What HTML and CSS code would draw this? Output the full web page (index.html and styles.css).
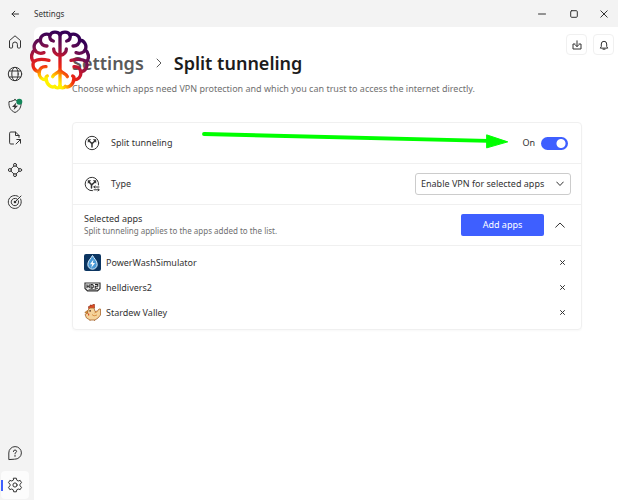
FILE: index.html
```html
<!DOCTYPE html>
<html lang="en">
<head>
  <meta charset="UTF-8" />
  <meta name="viewport" content="width=device-width, initial-scale=1.0"/>
  <title>Settings</title>
  <link rel="stylesheet" href="styles.css">
</head>
<body>
  <header class="titlebar">
    <button class="back" aria-label="Back">
      <svg class="icon" width="8" height="8" viewBox="0 0 8 8"><path d="M7.5 4H1M3.8 1.2L1 4l2.8 2.8"/></svg>
    </button>
    <span class="title">Settings</span>
    <div class="window-buttons">
      <button aria-label="Minimize"><svg class="icon" width="8" height="8" viewBox="0 0 8 8"><path d="M.5 4h7"/></svg></button>
      <button aria-label="Maximize"><svg class="icon" width="8" height="8" viewBox="0 0 8 8"><rect x=".7" y=".7" width="6.6" height="6.6" rx="1"/></svg></button>
      <button aria-label="Close"><svg class="icon" width="8" height="8" viewBox="0 0 8 8"><path d="M.8.8l6.4 6.4M7.2.8L.8 7.2"/></svg></button>
    </div>
  </header>

  <div class="shell">
    <nav class="sidebar">
      <a href="#" aria-label="Home">
        <svg class="icon" width="16" height="16" viewBox="0 0 16 16"><path d="M2.5 13.2V6.6L8 1.8l5.5 4.8v6.6q0 .8-.8.8h-1.5q-.8 0-.8-.8v-2.8a2.4 2.4 0 0 0-4.8 0v2.8q0 .8-.8.8H3.3q-.8 0-.8-.8z"/></svg>
      </a>
      <a href="#" aria-label="Servers">
        <svg class="icon" width="16" height="16" viewBox="0 0 16 16"><circle cx="8" cy="8" r="6.7"/><ellipse cx="8" cy="8" rx="3.2" ry="6.7"/><path d="M2.2 5h11.6M2.2 11h11.6"/></svg>
      </a>
      <a href="#" aria-label="Threat protection">
        <svg class="icon" width="16" height="16" viewBox="0 0 16 16"><path d="M8 1.7C6 3 4 3.5 2 3.6c-.5 5.4 1.5 9 6 10.9 4.5-1.9 6.5-5.5 6-10.9C12 3.5 10 3 8 1.7z"/><path class="solid" d="M9.3 4.6L5 8.9h2.5l-.8 3L11 7.7H8.5z"/><circle class="dot" cx="12.3" cy="3.8" r="3"/></svg>
      </a>
      <a href="#" aria-label="File share">
        <svg class="icon" width="16" height="16" viewBox="0 0 16 16"><path d="M6.5 14H3.8Q2.6 14 2.6 12.8V3.2Q2.6 2 3.8 2h4.7L12 5.5v2M8.5 2v3.5H12M9 14l4.5-4.5M9.8 9.5h3.7v3.7"/></svg>
      </a>
      <a href="#" aria-label="Meshnet">
        <svg class="icon" width="16" height="16" viewBox="0 0 16 16"><circle cx="8" cy="2.9" r="1.5"/><circle cx="2.9" cy="8" r="1.5"/><circle cx="13.1" cy="8" r="1.5"/><circle cx="8" cy="13.1" r="1.5"/><path d="M6.9 4L4 6.9M9.1 4L12 6.9M4 9.1L6.9 12M12 9.1L9.1 12"/></svg>
      </a>
      <a href="#" aria-label="Dark web monitor">
        <svg class="icon" width="16" height="16" viewBox="0 0 16 16"><path d="M13.6 5A6.5 6.5 0 1 1 11.2 2.4M11.4 6.7A3.7 3.7 0 1 1 9.8 4.8M8 8l6-6"/><circle class="solid" cx="8" cy="8" r="1.3"/></svg>
      </a>
      <a href="#" class="help" aria-label="Help">
        <svg class="icon" width="16" height="16" viewBox="0 0 16 16"><path d="M1.8 14.2V8A6.3 6.3 0 1 1 8 14.2z"/><path d="M6.4 6.5Q6.5 5 8 5t1.6 1.4Q9.6 7.3 8 8.3v.6M8 10.4v1"/></svg>
      </a>
      <a href="#" class="active" aria-label="Settings" aria-current="page">
        <svg class="icon" width="16" height="16" viewBox="0 0 16 16"><path d="M6.7 1.2h2.6l.5 2 1.4.8 2-.6 1.3 2.3-1.5 1.5v1.6l1.5 1.5-1.3 2.3-2-.6-1.4.8-.5 2H6.7l-.5-2-1.4-.8-2 .6-1.3-2.3L3 8.8V7.2L1.5 5.7l1.3-2.3 2 .6 1.4-.8z"/><circle cx="8" cy="8" r="2.1"/></svg>
      </a>
    </nav>

    <main class="content">
      <div class="toolbar">
        <button aria-label="Downloads"><svg class="icon" width="10" height="10" viewBox="0 0 10 10"><path d="M3 4H1v5h8V4H7M5 .8v5.7M3.2 4.8L5 6.6l1.8-1.8"/></svg></button>
        <button aria-label="Notifications"><svg class="icon" width="10" height="10" viewBox="0 0 10 10"><path d="M1.5 7.8L2.3 6.5V4a2.7 2.7 0 0 1 5.4 0v2.5l.8 1.3zM4 9.2h2"/></svg></button>
      </div>

      <h1 class="breadcrumb">
        <a href="#">Settings</a>
        <svg class="icon" width="6" height="10" viewBox="0 0 6 10"><path d="M1 1l4 4-4 4"/></svg>
        <span>Split tunneling</span>
      </h1>
      <p class="intro">Choose which apps need VPN protection and which you can trust to access the internet directly.</p>

      <section class="card">
        <div class="row">
          <svg class="icon row-icon" width="16" height="16" viewBox="0 0 16 16"><circle cx="8" cy="8" r="6.7"/><path class="thick" d="M8 12V9.5Q8 8.5 7 7.7L5 5.7M8 9.5Q8 8.5 9 7.7l2-2"/><path class="solid" d="M3.8 4.3H7.2L3.8 7.7zM12.2 4.3H8.8l3.4 3.4z"/></svg>
          <label class="row-label" for="split">Split tunneling</label>
          <span class="state">On</span>
          <input type="checkbox" id="split" class="switch" role="switch" checked>
          <svg class="arrow" viewBox="0 0 308 16"><path d="M1 4l287 7"/><polygon points="287,5 308,12 287,18"/></svg>
        </div>

        <div class="row">
          <svg class="icon row-icon" width="16" height="16" viewBox="0 0 16 16"><path d="M8.5 14.7A6.7 6.7 0 1 1 14.5 9"/><path class="thick" d="M7.5 12V9.5Q7.5 8.5 6.5 7.7L5 5.7M7.5 9.5Q8 8.5 9 7.7l2-2"/><path class="solid" d="M3.8 4.3H7.2L3.8 7.7zM12.2 4.3H8.8l3.4 3.4z"/><path d="M15 11h-5M11 9.8L9.8 11l1.2 1M10 13.8h5M14 12.7l1.2 1.1-1.2 1.1"/></svg>
          <label class="row-label" for="type">Type</label>
          <div class="select">
            <select id="type">
              <option>Enable VPN for selected apps</option>
            </select>
            <svg class="icon" width="8" height="6" viewBox="0 0 8 6"><path d="M.7 1L4 4.5 7.3 1"/></svg>
          </div>
        </div>

        <div class="row">
          <div class="row-text">
            <h2>Selected apps</h2>
            <p>Split tunneling applies to the apps added to the list.</p>
          </div>
          <button class="add">Add apps</button>
          <button class="collapse" aria-label="Collapse"><svg class="icon" width="10" height="6" viewBox="0 0 10 6"><path d="M.7 5.2L5 1l4.3 4.2"/></svg></button>
        </div>

        <ul class="apps">
          <li>
            <svg width="17" height="17" viewBox="0 0 17 17">
              <rect width="17" height="17" rx="2" fill="#0b3561"/>
              <path d="M8.5 1.5C7 4.5 3.8 6.7 3.8 10.5a4.7 4.7 0 0 0 9.4 0C13.2 6.7 10 4.5 8.5 1.5z" fill="#4b9ad6" stroke="#d9efff" stroke-width="1"/>
              <path d="M9.5 5.5L6 10.3h2.2L7.2 14 11 9H8.8z" fill="#fff"/>
            </svg>
            <span>PowerWashSimulator</span>
            <button aria-label="Remove PowerWashSimulator"><svg class="icon" width="5" height="5" viewBox="0 0 5 5"><path d="M.5.5l4 4M4.5.5l-4 4"/></svg></button>
          </li>
          <li>
            <svg width="17" height="17" viewBox="0 0 17 17">
              <path d="M1 4h15v5.500l-2.500 2.300h-10L1 9.500z" fill="#fff" stroke="#333" stroke-width="1.200"/>
              <path d="M3 5.300v4M5.200 5.300v4M3 7.300h2.200M7 5.500v3.600h1.200l1-.8V6.300l-1-.8zM11 5.500h2.800v1.700H11.200v2H14" fill="none" stroke="#222" stroke-width="1.100"/>
              <path d="M4.500 10.500h8" stroke="#777"/>
            </svg>
            <span>helldivers2</span>
            <button aria-label="Remove helldivers2"><svg class="icon" width="5" height="5" viewBox="0 0 5 5"><path d="M.5.5l4 4M4.5.5l-4 4"/></svg></button>
          </li>
          <li>
            <svg width="17" height="17" viewBox="0 0 17 17">
              <path d="M4.5 4.5V2.5H6V1h1.5v1L9 .3h1.5V4L9 5z" fill="#dd4a24" stroke="#8d3018" stroke-width=".6"/>
              <path d="M4 6l2-2h4l1 3.5 2.5-.5 1.5-2h1.500v6L14 14l-3 2H6l-3.500-2L1 10.500 3.500 9z" fill="#f5d39a" stroke="#a8652b" stroke-width=".8"/>
              <path d="M3.5 6.5L.8 8.5l2.7 1zM6 16v1M10.500 16v1" fill="#eb9a2d" stroke="#a8652b" stroke-width=".7"/>
              <path d="M8 10.5q1.5 2.5 5 .5M10.500 9l3-1.500" fill="none" stroke="#d99448"/>
              <rect x="5.500" y="6" width="1.200" height="1.700" fill="#4b2614"/>
              <path d="M4 9.500v2h1.200V9.500z" fill="#d94727"/>
            </svg>
            <span>Stardew Valley</span>
            <button aria-label="Remove Stardew Valley"><svg class="icon" width="5" height="5" viewBox="0 0 5 5"><path d="M.5.5l4 4M4.5.5l-4 4"/></svg></button>
          </li>
        </ul>
      </section>
    </main>
  </div>

  <!-- brain watermark -->
  <svg class="brain" viewBox="90 90 180 180">
    <defs>
      <radialGradient id="heat" gradientUnits="userSpaceOnUse" cx="145" cy="275" r="190">
        <stop offset=".22" stop-color="#fff200"/>
        <stop offset=".32" stop-color="#ff9a00"/>
        <stop offset=".42" stop-color="#f02a10"/>
        <stop offset=".56" stop-color="#d0182a"/>
        <stop offset=".74" stop-color="#75104f"/>
        <stop offset=".95" stop-color="#350055"/>
      </radialGradient>
    </defs>
    <g fill="none" stroke="url(#heat)" stroke-width="10" stroke-linecap="round" stroke-linejoin="round">
      <path d="M180 104C174 94 155 94 150 105C137 98 121 106 121 120C106 122 99 136 104 149C92 159 92 177 101 185C95 200 104 214 118 216C115 230 127 241 139 239C140 254 155 265 164 259C169 266 178 265 180 258"/>
      <path d="M180 104C186 94 205 94 210 105C223 98 239 106 239 120C254 122 261 136 256 149C268 159 268 177 259 185C265 200 256 214 242 216C245 230 233 241 221 239C220 254 205 265 196 259C191 266 182 265 180 258"/>
      <path d="M180 106v152M161 147c0 12 9 17 19 20 10-3 19-8 19-20M180 210c-5 11-18 9-22 20M180 210c5 11 18 9 22 20"/>
      <path d="M150 105c-3 10 2 16 10 18M210 105c3 10-2 16-10 18M121 120c0 12 10 19 20 18M239 120c0 12-10 19-20 18"/>
      <path d="M104 149c5 10 17 13 28 9M256 149c-5 10-17 13-28 9M101 185c10-8 27-8 46-4M259 185c-10-8-27-8-46-4"/>
      <path d="M118 216c0-10 8-17 20-16M242 216c0-10-8-17-20-16M139 239c-2-5-1-9 3-11M221 239c2-5 1-9-3-11"/>
    </g>
  </svg>
</body>
</html>
```
FILE: styles.css
```css
:root {
  --bg: #f3f3f3;
  --fg: #333;
  --subtle: #707070;
  --line: #f0f0f0;
  --accent: #3e5fff;
}

* {
  box-sizing: border-box;
}

body {
  display: flex;
  flex-direction: column;
  min-height: 100vh;
  margin: 0;
  background: var(--bg);
  color: var(--fg);
  font: 9px/14px "Segoe UI", "Noto Sans", sans-serif;
}

h1, h2, p, ul {
  margin: 0;
  padding: 0;
  font-weight: normal;
}

a {
  color: inherit;
  text-decoration: none;
}

button {
  display: flex;
  align-items: center;
  justify-content: center;
  padding: 0;
  border: 0;
  background: none;
  color: inherit;
  font: inherit;
  cursor: pointer;
}

.icon {
  flex: none;
  fill: none;
  stroke: currentColor;
  stroke-width: 1;
  stroke-linecap: round;
  stroke-linejoin: round;
}

.icon .solid {
  fill: currentColor;
  stroke: none;
}

.icon .thick {
  stroke-width: 1.5;
}

.icon .dot {
  fill: #12875a;
  stroke: none;
}

.titlebar {
  display: flex;
  align-items: center;
  height: 27px;
}

.back {
  width: 30px;
  height: 27px;
}

.title {
  margin-left: 4px;
  font-size: 8px;
}

.window-buttons {
  display: flex;
  margin-left: auto;
}

.window-buttons button {
  width: 32px;
  height: 27px;
}

.window-buttons button:last-child {
  width: 28px;
}

.shell {
  display: flex;
  flex: 1;
}

.sidebar {
  display: flex;
  flex-direction: column;
  gap: 4px;
  width: 34px;
  padding: 1px 5px 1px 1px;
}

.sidebar a {
  display: flex;
  align-items: center;
  justify-content: center;
  height: 28px;
  border-radius: 4px;
}

.sidebar .help {
  margin-top: auto;
}

.sidebar .active {
  background: linear-gradient(var(--accent), var(--accent)) 0 center / 2px 11px no-repeat, #fcfcfc;
}

.content {
  flex: 1;
  padding: 7px 36px 24px 38px;
  border-radius: 6px 0 0 0;
  background: #fff;
}

.toolbar {
  display: flex;
  justify-content: flex-end;
  gap: 6px;
  height: 21px;
  margin-right: -32px;
}

.toolbar button {
  width: 21px;
  height: 21px;
  border: 1px solid var(--line);
  border-radius: 4px;
}

.breadcrumb {
  display: flex;
  align-items: center;
  gap: 12px;
  margin-top: -4px;
  color: #1c1c1c;
  font-size: 18px;
  font-weight: 600;
  line-height: 24px;
}

.breadcrumb a,
.breadcrumb .icon {
  color: #5a5a5a;
}

.intro {
  margin-top: 7px;
  color: var(--subtle);
}

.card {
  margin-top: 26px;
  border: 1px solid var(--line);
  border-radius: 4px;
  box-shadow: 0 1px 2px #00000008;
}

.row {
  position: relative;
  display: flex;
  align-items: center;
  height: 41px;
  padding: 0 10px 0 11px;
  border-bottom: 1px solid var(--line);
}

.row-icon {
  margin-right: 11px;
}

.row-label {
  flex: 1;
}

.state {
  margin-right: 6px;
}

.switch {
  appearance: none;
  width: 27px;
  height: 13px;
  margin: 0 3px 0 0;
  border-radius: 7px;
  background: radial-gradient(circle at 20px 50%, #fff 4px, transparent 5px) var(--accent);
}

.arrow {
  position: absolute;
  top: 7px;
  right: 73px;
  width: 60%;
  overflow: visible;
  fill: #0f0;
  stroke: #0f0;
  stroke-linecap: round;
}

.arrow path {
  stroke-width: 4;
}

.select {
  position: relative;
}

.select select {
  appearance: none;
  width: 156px;
  height: 22px;
  padding: 0 5px;
  border: 1px solid #ccc;
  border-radius: 3px;
  background: #fff;
  color: inherit;
  font: inherit;
}

.select .icon {
  position: absolute;
  top: 8px;
  right: 7px;
  pointer-events: none;
}

.row-text {
  flex: 1;
  line-height: 12px;
}

.row-text h2 {
  font-size: 9px;
}

.row-text p {
  color: var(--subtle);
  font-size: 8px;
}

.add {
  width: 83px;
  height: 22px;
  border-radius: 2px;
  background: var(--accent);
  color: #fff;
}

.collapse {
  width: 22px;
  height: 22px;
  margin-left: 5px;
}

.apps {
  padding: 4px 10px 4px 11px;
  list-style: none;
}

.apps li {
  display: flex;
  align-items: center;
  gap: 5px;
  height: 25px;
}

.apps button {
  width: 18px;
  height: 18px;
  margin-left: auto;
}

.brain {
  position: absolute;
  top: 30px;
  left: 30px;
  width: 60px;
  height: 60px;
  pointer-events: none;
}
```
